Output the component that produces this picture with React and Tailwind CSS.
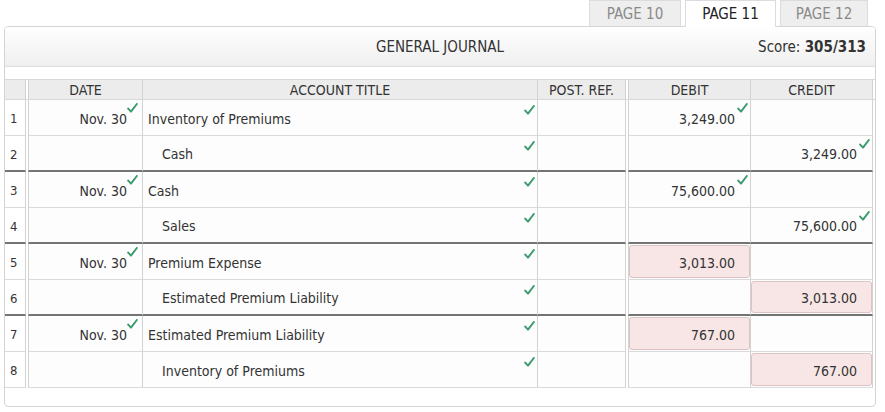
import React from "react";

const FONT = { fontFamily: '"DejaVu Sans Condensed", "Liberation Sans Narrow", "Liberation Sans", sans-serif' };

function Check({ className = "" }) {
  return (
    <svg className={className} width="11" height="10" viewBox="0 0 11 10" fill="none">
      <path d="M1.2 5.6 L4 8.6 L9.8 1" stroke="#3d9c6f" strokeWidth="2" strokeLinecap="round" strokeLinejoin="round" />
    </svg>
  );
}

const rows = [
  { date: true, acct: "Inventory of Premiums", indent: false, debit: "3,249.00", dOk: true },
  { acct: "Cash", indent: true, credit: "3,249.00", cOk: true, sep: "thin" },
  { date: true, acct: "Cash", indent: false, debit: "75,600.00", dOk: true },
  { acct: "Sales", indent: true, credit: "75,600.00", cOk: true, sep: "thick" },
  { date: true, acct: "Premium Expense", indent: false, debit: "3,013.00", dBad: true },
  { acct: "Estimated Premium Liability", indent: true, credit: "3,013.00", cBad: true, sep: "thick" },
  { date: true, acct: "Estimated Premium Liability", indent: false, debit: "767.00", dBad: true },
  { acct: "Inventory of Premiums", indent: true, credit: "767.00", cBad: true, sep: "none" },
];

function Amount({ value, ok, bad }) {
  if (bad) {
    return (
      <div className="h-full py-px">
        <div className="h-full rounded-[3px] border border-[#dcc4c4] bg-[#f8e5e5] flex items-center justify-end pr-[14px] pt-[3px]">
          {value}
        </div>
      </div>
    );
  }
  return (
    <div className="relative h-full flex items-center justify-end pr-[15px] pt-[3px]">
      {value}
      {ok && <Check className="absolute right-[2px] top-[3px]" />}
    </div>
  );
}

export default function App() {
  return (
    <div className="w-[885px] h-[412px] bg-white text-[#333] text-[14px] relative" style={FONT}>
      {/* tabs */}
      <div className="flex h-[26px] pl-[589px] gap-[4px] text-[15px]">
        <div className="w-[92px] h-[26px] bg-[#eeeeee] border border-b-0 border-[#dcdcdc] text-[#8a8a8a] flex items-center justify-center pt-[1px]">PAGE 10</div>
        <div className="w-[91px] h-[27px] bg-white border border-b-0 border-[#dcdcdc] text-[#222] flex items-center justify-center relative z-10">PAGE 11</div>
        <div className="w-[88px] h-[26px] bg-[#eeeeee] border border-b-0 border-[#dcdcdc] text-[#8a8a8a] flex items-center justify-center pt-[1px]">PAGE 12</div>
      </div>
      {/* panel */}
      <div className="ml-[4px] w-[872px] h-[381px] border border-[#d4d4d4] rounded-[4px] bg-white overflow-hidden">
        <div className="h-[40px] border-b border-[#dedede] bg-gradient-to-b from-white to-[#efefef] flex items-center relative text-[15px]">
          <div className="absolute inset-0 flex items-center justify-center text-[#333] pt-[2px]">GENERAL JOURNAL</div>
          <div className="ml-auto pr-[9px] relative pt-[2px]">
            Score: <span className="font-bold">305/313</span>
          </div>
        </div>
        <div className="h-[12px]" />
        {/* table header */}
        <div className="flex h-[21px] border-t border-b border-[#d8d8d8] text-[14px]">
          <div className="w-[21px] bg-[#ececec] border-r border-[#d2d2d2]" />
          <div className="w-[2px] bg-white" />
          <div className="w-[115px] bg-[#ececec] border-l border-r border-[#d2d2d2] flex items-center justify-center pt-[1px]">DATE</div>
          <div className="w-[395px] bg-[#ececec] border-r border-[#d2d2d2] flex items-center justify-center pt-[1px]">ACCOUNT TITLE</div>
          <div className="w-[88px] bg-[#ececec] border-r border-[#d2d2d2] flex items-center justify-center pt-[1px]">POST. REF.</div>
          <div className="w-[2px] bg-white" />
          <div className="w-[123px] bg-[#ececec] border-l border-r border-[#d2d2d2] flex items-center justify-center pt-[1px]">DEBIT</div>
          <div className="w-[122px] bg-[#ececec] border-r border-[#d2d2d2] flex items-center justify-center pt-[1px]">CREDIT</div>
        </div>
        {rows.map((r, i) => {
          const sepCls =
            r.sep === "thick" || r.sep === "thin"
              ? "border-b-2 border-b-[#747474]"
              : "border-b border-b-[#dadada]";
          return (
            <div key={i} className="flex h-[36px]">
              <div className={`w-[21px] border-r border-r-[#d2d2d2] ${sepCls} flex items-center pl-[5px] pt-[3px] text-[13px]`}>{i + 1}</div>
              <div className="w-[2px] bg-white" />
              <div className={`w-[115px] border-l border-r border-l-[#d2d2d2] border-r-[#d2d2d2] ${sepCls} bg-[#fdfdfd] relative flex items-center justify-end pr-[15px] pt-[3px]`}>
                {r.date && (
                  <>
                    Nov. 30
                    <Check className="absolute right-[4px] top-[3px]" />
                  </>
                )}
              </div>
              <div className={`w-[395px] border-r border-r-[#d2d2d2] ${sepCls} bg-[#fdfdfd] relative flex items-center pt-[3px] ${r.indent ? "pl-[19px]" : "pl-[5px]"}`}>
                {r.acct}
                <Check className="absolute right-[2px] top-[5px]" />
              </div>
              <div className={`w-[88px] border-r border-r-[#d2d2d2] ${sepCls} bg-[#fdfdfd]`} />
              <div className="w-[2px] bg-white" />
              <div className={`w-[123px] border-l border-r border-l-[#d2d2d2] border-r-[#d2d2d2] ${sepCls} bg-[#fdfdfd]`}>
                {r.debit && <Amount value={r.debit} ok={r.dOk} bad={r.dBad} />}
              </div>
              <div className={`w-[122px] border-r border-r-[#d2d2d2] ${sepCls} bg-[#fdfdfd]`}>
                {r.credit && <Amount value={r.credit} ok={r.cOk} bad={r.cBad} />}
              </div>
            </div>
          );
        })}
      </div>
    </div>
  );
}
